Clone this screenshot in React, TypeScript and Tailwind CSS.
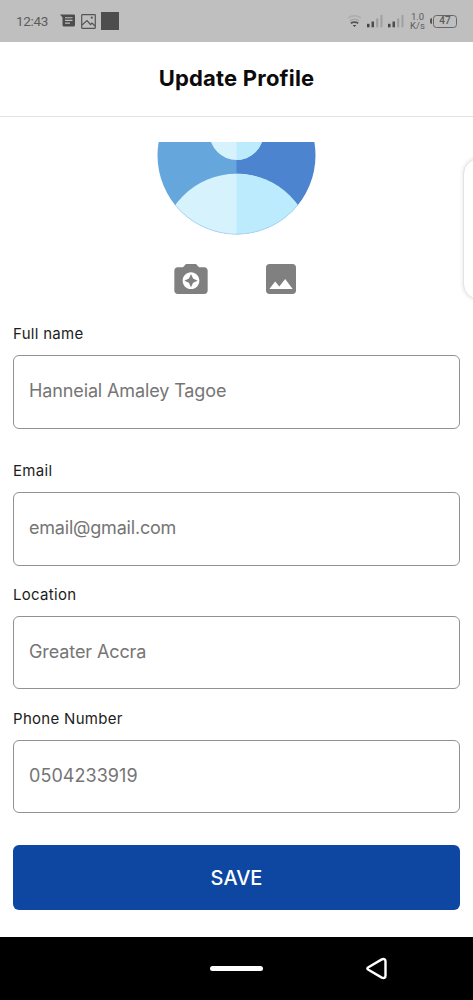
import React from "react";
import { MdCameraEnhance, MdImage } from "react-icons/md";

function StatusBar() {
  return (
    <div className="flex h-[42px] shrink-0 items-center justify-between bg-[#bfbfbf] pr-[16px] pl-[16px] text-[#5c5c5c]">
      <div className="flex items-center">
        <span className="w-[44px] pt-[1px] font-['Roboto',sans-serif] text-[13.500px] leading-none tracking-[-0.3px] whitespace-nowrap">12:43</span>
        <svg className="h-[14px] w-[16px]" viewBox="0 0 16 14">
          <path d="M0 0.500H14q1 0 1 1v9.500q0 1.500-1.500 1.500H4q-1.500 0-1.500-1.500V3.500z" fill="#4c4c4c" />
          <path d="M5 3.700h7.500M5 6.400h7.500M5 9.100h5" stroke="#bfbfbf" strokeWidth="1.100" />
        </svg>
        <svg className="ml-[5px] h-[15px] w-[15px]" viewBox="0 0 15 15" fill="none" stroke="#555" strokeWidth="1.200">
          <rect x="0.700" y="0.700" width="13.600" height="13.600" rx="0.500" />
          <path d="M1 11l5-4.500 3.500 4 1.500-1.500 3 3" />
          <circle cx="10.800" cy="3.700" r="0.500" />
        </svg>
        <div className="ml-[5px] h-[18px] w-[18px] bg-[#4d4d4d]" />
      </div>
      <div className="flex items-center">
        <svg className="h-[16px] w-[15px]" viewBox="0 0 15 16" fill="none">
          <path d="M1 5Q7.500 0.500 14 5" stroke="#adadad" strokeWidth="1.500" />
          <path d="M3 7.800Q7.500 4.500 12 7.800" stroke="#a4a4a4" strokeWidth="1.300" />
          <path d="M3.800 10.300Q7.500 7.800 11.200 10.300" stroke="#555" strokeWidth="1.700" />
          <path d="M5.700 12h3.600L7.500 14z" fill="#444" />
        </svg>
        <Signal />
        <Signal />
        <div className="ml-[6px] w-[15px] font-['Roboto',sans-serif] text-[9.500px] leading-[9px] text-center whitespace-nowrap">
          <div>1.0</div>
          <div>K/s</div>
        </div>
        <div className="ml-[5px] h-[6px] w-[2px] rounded-l-sm bg-[#555]" />
        <div className="ml-[1px] flex h-[13px] w-[24px] items-center justify-center rounded-[3.500px] border-[1.500px] border-[#666] font-['Roboto',sans-serif] text-[10px] leading-none font-medium">47</div>
      </div>
    </div>
  );
}

function Signal() {
  return (
    <svg className="ml-[5px] h-[14px] w-[16px]" viewBox="0 0 16 14">
      <rect x="0" y="9.800" width="2.500" height="3.500" fill="#444" />
      <rect x="4.500" y="7.500" width="2.500" height="5.800" fill="#4d4d4d" />
      <rect x="9.200" y="4.500" width="2" height="8.800" fill="#9c9c9c" />
      <rect x="13.500" y="1" width="2" height="12.300" fill="#a0a0a0" />
    </svg>
  );
}

function Avatar() {
  return (
    <svg className="mx-auto block h-[93px] w-[160px]" viewBox="157 142 160 93">
      <defs>
        <clipPath id="disc">
          <circle cx="236.500" cy="155.300" r="79" />
        </clipPath>
        <clipPath id="right">
          <rect x="236.500" y="70" width="90" height="170" />
        </clipPath>
      </defs>
      <g clipPath="url(#disc)">
        <rect x="156" y="70" width="81" height="170" fill="#65a7dc" />
        <rect x="236.500" y="70" width="81" height="170" fill="#4c84cf" />
        <g fill="#d5f2fd">
          <circle cx="236.500" cy="133" r="27" />
          <circle cx="236.500" cy="249.500" r="75.700" />
        </g>
        <g fill="#bbebfd" clipPath="url(#right)">
          <circle cx="236.500" cy="133" r="27" />
          <circle cx="236.500" cy="249.500" r="75.700" />
        </g>
      </g>
      <path d="M175.500 205.300A79 79 0 0 0 297.500 205.300" fill="none" stroke="#93c5e6" strokeWidth="0.500" />
    </svg>
  );
}

interface FieldProps {
  label: string;
  value: string;
  className: string;
  inputClass: string;
}

function Field({ label, value, className, inputClass }: FieldProps) {
  return (
    <label className={"block " + className}>
      <span className="block h-[20px] text-[15px] leading-[20px] tracking-[0.3px] text-[#1c1c1c]">{label}</span>
      <input
        className={
          "mt-[11px] block w-full rounded-[6px] border border-[#929292] bg-white px-[15px] text-[18px] text-[#757575] outline-none " +
          inputClass
        }
        defaultValue={value}
      />
    </label>
  );
}

export default function App() {
  return (
    <div className="flex h-[1000px] w-[473px] flex-col overflow-hidden bg-white font-['Inter',sans-serif]">
      <StatusBar />
      <header className="flex h-[75px] shrink-0 items-center justify-center border-b border-[#e3e3e3] pb-[2px]">
        <h1 className="text-[22px] font-bold tracking-[0.2px] text-[#0b0b0b]">Update Profile</h1>
      </header>
      <main className="relative h-[820px] shrink-0 overflow-hidden px-[13px] pt-[25px]">
        <Avatar />
        <div className="mt-[24px] flex h-[40px] justify-center gap-[50px] pr-[1px] text-[#808080]">
          <MdCameraEnhance className="h-[40px] w-[40px]" />
          <MdImage className="h-[40px] w-[40px]" />
        </div>
        <Field label="Full name" value="Hanneial Amaley Tagoe" className="mt-[25px]" inputClass="h-[74px] pb-[3px] tracking-[-0.12px]" />
        <Field label="Email" value="email@gmail.com" className="mt-[32px]" inputClass="h-[74px] pb-[3px] tracking-[-0.2px]" />
        <Field label="Location" value="Greater Accra" className="mt-[19px]" inputClass="h-[73px] pb-[3px] tracking-[-0.1px]" />
        <Field label="Phone Number" value="0504233919" className="mt-[20px]" inputClass="h-[73px] pb-[3px] tracking-[0.05px]" />
        <button className="mt-[32px] flex h-[65px] w-full items-center justify-center rounded-[6px] bg-[#0d47a1] text-[20px] font-medium text-white">
          SAVE
        </button>
        <div className="absolute top-[41px] -right-[22px] h-[142px] w-[32px] rounded-[24px] border border-[#e3e3e3] bg-white shadow-[0_0_4px_rgba(0,0,0,0.12)]" />
      </main>
      <nav className="grid h-[63px] shrink-0 grid-cols-[210px_53px_102px_24px] items-center bg-black">
        <div />
        <div className="h-[5px] rounded-full bg-white" />
        <div />
        <svg className="h-[24px] w-[24px]" viewBox="0 0 24 24" fill="none" stroke="white" strokeWidth="2.400" strokeLinejoin="round">
          <path d="M3.400 10.200L16.800 2.400Q20.500 1 20.500 4.500V18.500Q20.500 22 16.800 20.600L3.400 12.800Q1.300 11.500 3.400 10.200Z" />
        </svg>
      </nav>
    </div>
  );
}
